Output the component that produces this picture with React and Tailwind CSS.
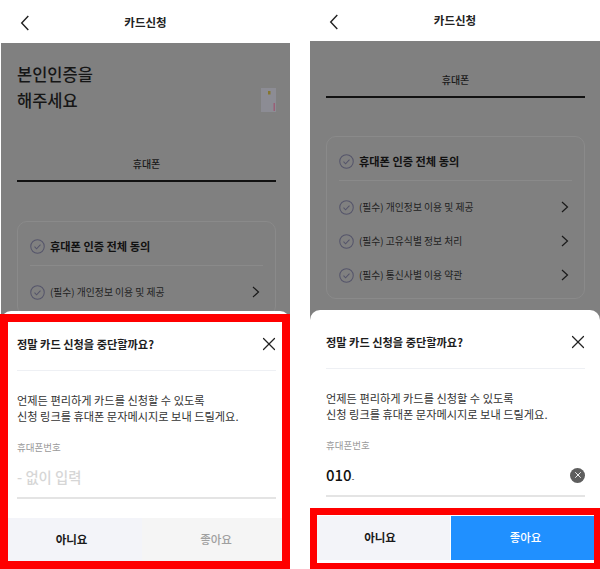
import { X } from "lucide-react";

function Check({ className }) {
  return (
    <svg viewBox="0 0 16 16" fill="none" className={className}>
      <circle cx="8" cy="8" r="7.2" stroke="#54546a" strokeWidth="1.1" />
      <path d="M4.8 8.2l2.2 2.2 4.2-4.4" stroke="#54546a" strokeWidth="1.1" />
    </svg>
  );
}

function Header({ className, backClass }) {
  return (
    <div className={`relative flex items-center justify-center bg-white ${className}`}>
      <svg viewBox="0 0 10 17" fill="none" className={`absolute left-[19px] h-[16px] w-[10px] ${backClass}`}>
        <path d="M8.5 1L1.5 8.5L8.5 16" stroke="#222" strokeWidth="1.5" />
      </svg>
      <h1 className="text-[11.5px] font-bold text-[#222]">카드신청</h1>
    </div>
  );
}

function Tab() {
  return (
    <div className="w-[259px] border-b-2 border-[#111] pb-[9px] text-center text-[10px] leading-[15px] font-medium text-[#1a1a1a]">
      휴대폰
    </div>
  );
}

function TermRow({ label }) {
  return (
    <div className="flex h-[34px] items-center">
      <Check className="mr-[5px] h-[15px] w-[15px]" />
      <span className="flex-1 text-[9.8px] text-[#222]">{label}</span>
      <svg viewBox="0 0 8 12" fill="none" className="mr-[3px] h-[12px] w-[8px]">
        <path d="M1 1l5.5 5L1 11" stroke="#1a1a1a" strokeWidth="1.2" />
      </svg>
    </div>
  );
}

function Terms({ rows }) {
  return (
    <div className="w-[259px] rounded-[10px] border border-[#8a8a8a] px-[12px] pb-[6px]">
      <div className="flex h-[44px] items-center border-b border-[#8a8a8a] pt-[5px]">
        <Check className="mr-[5px] h-[15px] w-[15px]" />
        <span className="text-[11.2px] font-bold text-[#111]">휴대폰 인증 전체 동의</span>
      </div>
      <div className="pt-[9px]">
        {rows.map((r) => (
          <TermRow key={r} label={r} />
        ))}
      </div>
    </div>
  );
}

function Sheet({ className, padTop, noWidth, okClass, filled }) {
  return (
    <div className={`absolute inset-x-0 bottom-0 rounded-t-[10px] bg-white ${className}`}>
      <div className={`pl-4 ${padTop}`}>
        <div className="w-[259px]">
          <div className="flex h-[26px] items-center justify-between">
            <h2 className="text-[11.2px] font-bold text-[#1c1c1c]">정말 카드 신청을 중단할까요?</h2>
            <X size={22} strokeWidth={1.3} color="#222" className="-mr-[4px]" />
          </div>
          <div className="mt-[13px] border-b border-[#eef0f4]" />
          <p className="mt-[21px] text-[11.2px] leading-[16px] text-[#333]">
            언제든 편리하게 카드를 신청할 수 있도록
            <br />
            신청 링크를 휴대폰 문자메시지로 보내 드릴게요.
          </p>
          <div className="mt-[16px] text-[9.5px] leading-[14px] text-[#9a9a9a]">휴대폰번호</div>
          <div className="mt-[9px] flex h-[28px] items-center justify-between">
            {filled ? (
              <>
                <span className="text-[15px] font-medium text-[#111]">
                  010<span className="text-[7px]">-</span>
                </span>
                <span className="flex h-[15px] w-[15px] items-center justify-center rounded-full bg-[#5e5e5e]">
                  <X size={10} strokeWidth={2.4} color="#eee" />
                </span>
              </>
            ) : (
              <span className="text-[14.4px] font-medium text-[#d6d6d6]">- 없이 입력</span>
            )}
          </div>
          <div className="mt-[6px] border-b-2 border-[#e4e4e4]" />
        </div>
      </div>
      <div className="mt-[19px] flex h-[44px]">
        <button className={`bg-[#f3f4f9] text-[11.5px] font-bold text-[#1a1a1a] ${noWidth}`}>아니요</button>
        <button className={`flex-1 text-[11.5px] font-medium ${okClass}`}>좋아요</button>
      </div>
    </div>
  );
}

export default function App() {
  return (
    <div className="flex h-[569px] w-[600px] justify-between overflow-hidden bg-white font-['Noto_Sans_CJK_KR','Noto_Sans',sans-serif]">
      <div className="relative ml-px flex w-[289px] flex-col">
        <Header className="h-[43px] pt-[3px]" backClass="top-[15px]" />
        <div className="flex-1 overflow-hidden bg-[#808080] pl-4">
          <div className="mt-[18px] flex w-[259px] items-end justify-between">
            <h2 className="text-[16.5px] leading-[26px] font-medium text-[#161616]">
              본인인증을
              <br />
              해주세요
            </h2>
            <svg viewBox="0 0 15 24" className="mb-[1px] h-[24px] w-[15px]">
              <rect width="15" height="24" fill="#8c8c94" />
              <rect x="7" y="3" width="2.5" height="3.5" fill="#85762f" />
              <rect x="12.5" y="15" width="1.5" height="8" fill="#9a5f76" />
            </svg>
          </div>
          <div className="mt-[43px]">
            <Tab />
          </div>
          <div className="mt-[39px]">
            <Terms rows={["(필수) 개인정보 이용 및 제공"]} />
          </div>
        </div>
        <Sheet
          className="h-[258px]"
          padTop="pt-[20px]"
          noWidth="w-[141px]"
          okClass="bg-[#f5f5f5] text-[#a0a0a0]"
        />
        <div className="absolute top-[314px] -left-px h-[255px] w-[290px] border-8 border-[#ff0000]" />
      </div>

      <div className="relative flex w-[290px] flex-col">
        <Header className="h-[41px]" backClass="top-[14px]" />
        <div className="flex-1 overflow-hidden bg-[#808080] pl-4">
          <div className="mt-[31px]">
            <Tab />
          </div>
          <div className="mt-[38px]">
            <Terms rows={["(필수) 개인정보 이용 및 제공", "(필수) 고유식별 정보 처리", "(필수) 통신사별 이용 약관"]} />
          </div>
        </div>
        <Sheet
          className="h-[259px]"
          padTop="pt-[19px]"
          noWidth="mr-px w-[140px]"
          okClass="bg-[#2090ff] text-white"
          filled
        />
        <div className="absolute top-[508px] left-0 h-[61px] w-[290px] border-t-7 border-r-6 border-b-6 border-l-7 border-[#ff0000]" />
      </div>
    </div>
  );
}
